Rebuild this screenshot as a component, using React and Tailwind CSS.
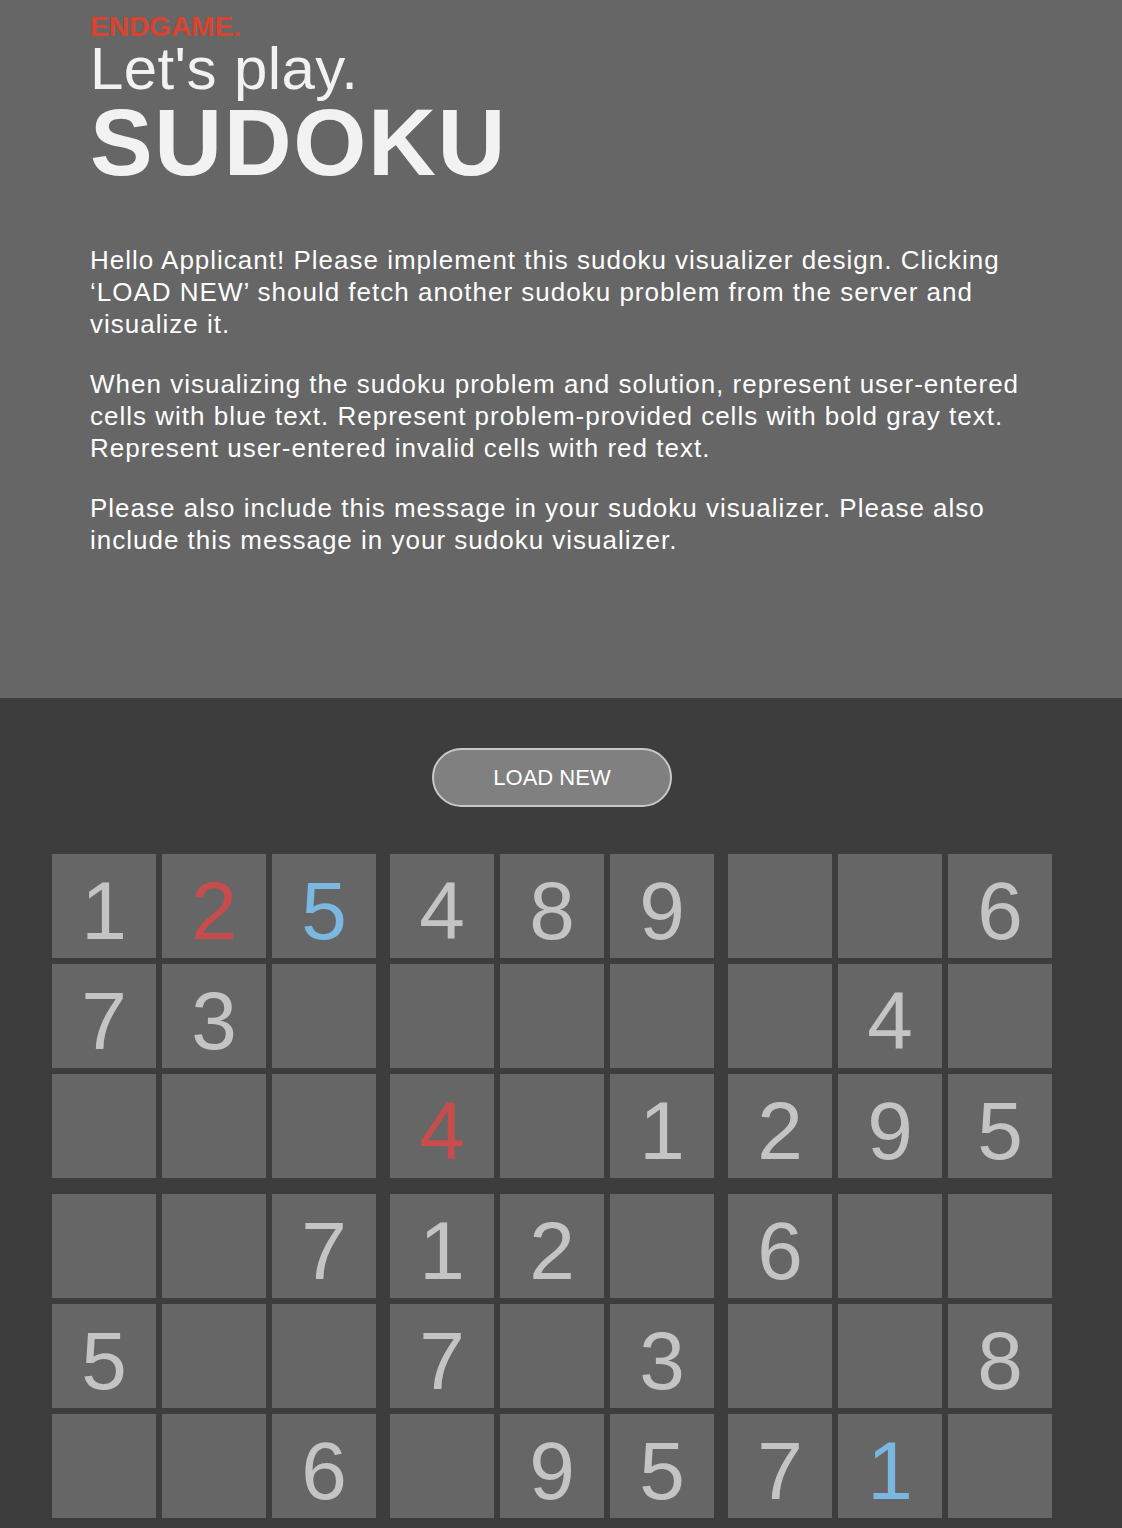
import React from 'react';

const G = 'g';
const R = 'r';
const B = 'b';

// [value, kind] ; kind: g = given (gray), b = user (blue), r = invalid (red)
const board = [
    [[1, G], [2, R], [5, B], [4, G], [8, G], [9, G], null, null, [6, G]],
    [[7, G], [3, G], null, null, null, null, null, [4, G], null],
    [null, null, null, [4, R], null, [1, G], [2, G], [9, G], [5, G]],
    [null, null, [7, G], [1, G], [2, G], null, [6, G], null, null],
    [[5, G], null, null, [7, G], null, [3, G], null, null, [8, G]],
    [null, null, [6, G], null, [9, G], [5, G], [7, G], [1, B], null],
    [null, [8, G], null, null, null, null, null, [6, G], null],
    [null, null, null, [3, G], null, [8, G], null, null, [2, G]],
    [[6, G], null, [2, G], null, null, [7, G], null, [5, G], null],
];

const colorFor = (kind) =>
    kind === R ? 'text-[#c94c4c]' : kind === B ? 'text-[#7ab8e2]' : 'text-[#c4c4c4]';

const Cell = ({ cell }) => (
    <div className="w-[104px] h-[104px] bg-[#666666] text-center text-[82px] leading-[114px]">
        {cell && <span className={colorFor(cell[1])}>{cell[0]}</span>}
    </div>
);

const Box = ({ band, col }) => {
    const cells = [];
    for (let r = 0; r < 3; r++) {
        for (let c = 0; c < 3; c++) {
            cells.push(board[band * 3 + r][col * 3 + c]);
        }
    }
    return (
        <div className="grid grid-cols-3 gap-[6px]">
            {cells.map((cell, i) => (
                <Cell key={i} cell={cell} />
            ))}
        </div>
    );
};

export default function App() {
    return (
        <div className="w-[1122px] font-['Liberation_Sans',Arial,sans-serif]">
            {/* Header */}
            <div className="bg-[#666666] h-[698px] pl-[90px] pt-[13px] text-[#f2f2f2]">
                <div className="text-[28px] leading-[28px] font-bold text-[#d9432f]">ENDGAME.</div>
                <div className="text-[60px] leading-[56px] font-normal tracking-[0.4px]">Let's play.</div>
                <div className="text-[94px] leading-[91px] font-bold tracking-[1.6px]">SUDOKU</div>

                <div className="w-[942px] mt-[56px] text-[26px] leading-[32px] tracking-[1px] text-white">
                    <p>
                        Hello Applicant! Please implement this sudoku visualizer design. Clicking
                        ‘LOAD NEW’ should fetch another sudoku problem from the server and visualize it.
                    </p>
                    <p className="mt-7">
                        When visualizing the sudoku problem and solution, represent user-entered cells
                        with blue text. Represent problem-provided cells with bold gray text. Represent
                        user-entered invalid cells with red text.
                    </p>
                    <p className="mt-7">
                        Please also include this message in your sudoku visualizer. Please also include
                        this message in your sudoku visualizer.
                    </p>
                </div>
            </div>

            {/* Board */}
            <div className="bg-[#3d3d3d] pt-[50px] pb-[40px]">
                <div className="w-[1000px] ml-[52px] flex flex-col items-center">
                    <button className="w-[240px] h-[59px] rounded-full bg-[#808080] border-2 border-[#c8c8c8] text-white text-[22px]">
                        LOAD NEW
                    </button>
                    <div className="mt-[47px] flex flex-col gap-4">
                        {[0, 1, 2].map((band) => (
                            <div key={band} className="flex gap-[14px]">
                                {[0, 1, 2].map((col) => (
                                    <Box key={col} band={band} col={col} />
                                ))}
                            </div>
                        ))}
                    </div>
                </div>
            </div>
        </div>
    );
}
